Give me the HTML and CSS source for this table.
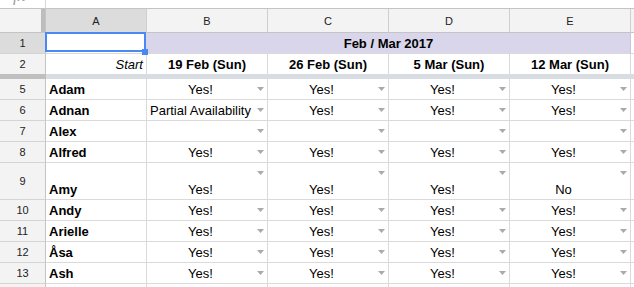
FILE: index.html
```html
<!DOCTYPE html>
<html lang="en">
<head>
  <meta charset="UTF-8">
  <title>Availability</title>
  <link rel="stylesheet" href="styles.css">
</head>
<body>

  <div class="formula">
    <div class="fx-cell"><span class="fx">fx</span></div>
    <div></div>
  </div>

  <div class="row colhead">
    <div class="corner"></div>
    <div class="ch sel">A</div>
    <div class="ch">B</div>
    <div class="ch">C</div>
    <div class="ch">D</div>
    <div class="ch">E</div>
    <div class="ch last"></div>
  </div>

  <div class="row">
    <div class="rh sel">1</div>
    <div class="cell a1"><div class="selection"><span class="handle"></span></div></div>
    <div class="cell merged bold">Feb / Mar 2017</div>
    <div class="cell"></div>
  </div>

  <div class="row r2">
    <div class="rh">2</div>
    <div class="cell start">Start</div>
    <div class="cell bold mid">19 Feb (Sun)</div>
    <div class="cell bold mid">26 Feb (Sun)</div>
    <div class="cell bold mid">5 Mar (Sun)</div>
    <div class="cell bold mid">12 Mar (Sun)</div>
    <div class="cell"></div>
  </div>

  <div class="freeze"><div class="fz-left"></div><div class="fz-right"></div></div>

  <div class="row">
    <div class="rh">5</div>
    <div class="cell bold">Adam</div>
    <div class="cell v"><span class="t">Yes!</span><i class="dd"></i></div>
    <div class="cell v"><span class="t">Yes!</span><i class="dd"></i></div>
    <div class="cell v"><span class="t">Yes!</span><i class="dd"></i></div>
    <div class="cell v"><span class="t">Yes!</span><i class="dd"></i></div>
    <div class="cell"></div>
  </div>

  <div class="row">
    <div class="rh">6</div>
    <div class="cell bold">Adnan</div>
    <div class="cell v"><span class="t">Partial Availability</span><i class="dd"></i></div>
    <div class="cell v"><span class="t">Yes!</span><i class="dd"></i></div>
    <div class="cell v"><span class="t">Yes!</span><i class="dd"></i></div>
    <div class="cell v"><span class="t">Yes!</span><i class="dd"></i></div>
    <div class="cell"></div>
  </div>

  <div class="row">
    <div class="rh">7</div>
    <div class="cell bold">Alex</div>
    <div class="cell v"><span class="t"></span><i class="dd"></i></div>
    <div class="cell v"><span class="t"></span><i class="dd"></i></div>
    <div class="cell v"><span class="t"></span><i class="dd"></i></div>
    <div class="cell v"><span class="t"></span><i class="dd"></i></div>
    <div class="cell"></div>
  </div>

  <div class="row">
    <div class="rh">8</div>
    <div class="cell bold">Alfred</div>
    <div class="cell v"><span class="t">Yes!</span><i class="dd"></i></div>
    <div class="cell v"><span class="t">Yes!</span><i class="dd"></i></div>
    <div class="cell v"><span class="t">Yes!</span><i class="dd"></i></div>
    <div class="cell v"><span class="t">Yes!</span><i class="dd"></i></div>
    <div class="cell"></div>
  </div>

  <div class="row tall">
    <div class="rh">9</div>
    <div class="cell bold">Amy</div>
    <div class="cell v"><span class="t">Yes!</span><i class="dd"></i></div>
    <div class="cell v"><span class="t">Yes!</span><i class="dd"></i></div>
    <div class="cell v"><span class="t">Yes!</span><i class="dd"></i></div>
    <div class="cell v"><span class="t">No</span><i class="dd"></i></div>
    <div class="cell"></div>
  </div>

  <div class="row">
    <div class="rh">10</div>
    <div class="cell bold">Andy</div>
    <div class="cell v"><span class="t">Yes!</span><i class="dd"></i></div>
    <div class="cell v"><span class="t">Yes!</span><i class="dd"></i></div>
    <div class="cell v"><span class="t">Yes!</span><i class="dd"></i></div>
    <div class="cell v"><span class="t">Yes!</span><i class="dd"></i></div>
    <div class="cell"></div>
  </div>

  <div class="row">
    <div class="rh">11</div>
    <div class="cell bold">Arielle</div>
    <div class="cell v"><span class="t">Yes!</span><i class="dd"></i></div>
    <div class="cell v"><span class="t">Yes!</span><i class="dd"></i></div>
    <div class="cell v"><span class="t">Yes!</span><i class="dd"></i></div>
    <div class="cell v"><span class="t">Yes!</span><i class="dd"></i></div>
    <div class="cell"></div>
  </div>

  <div class="row">
    <div class="rh">12</div>
    <div class="cell bold">Åsa</div>
    <div class="cell v"><span class="t">Yes!</span><i class="dd"></i></div>
    <div class="cell v"><span class="t">Yes!</span><i class="dd"></i></div>
    <div class="cell v"><span class="t">Yes!</span><i class="dd"></i></div>
    <div class="cell v"><span class="t">Yes!</span><i class="dd"></i></div>
    <div class="cell"></div>
  </div>

  <div class="row">
    <div class="rh">13</div>
    <div class="cell bold">Ash</div>
    <div class="cell v"><span class="t">Yes!</span><i class="dd"></i></div>
    <div class="cell v"><span class="t">Yes!</span><i class="dd"></i></div>
    <div class="cell v"><span class="t">Yes!</span><i class="dd"></i></div>
    <div class="cell v"><span class="t">Yes!</span><i class="dd"></i></div>
    <div class="cell"></div>
  </div>

  <div class="row">
    <div class="rh"></div>
    <div class="cell"></div>
    <div class="cell"></div>
    <div class="cell"></div>
    <div class="cell"></div>
    <div class="cell"></div>
    <div class="cell"></div>
  </div>

</body>
</html>
```

FILE: styles.css
```css
body {
  margin: 0;
  width: 634px;
  height: 287px;
  overflow: hidden;
  background: #fff;
  font-family: 'Liberation Sans', Arial, sans-serif;
  color: #000;
}
.formula {
  display: grid;
  grid-template-columns: 46px 1fr;
  height: 9px;
  border-bottom: 1px solid #c4c4c4;
  box-sizing: border-box;
}
.fx-cell {
  border-right: 1px solid #d6d6d6;
  overflow: hidden;
}
.fx {
  display: block;
  margin: -14px 0 0 13px;
  font-family: 'Liberation Serif', serif;
  font-style: italic;
  font-size: 17px;
  line-height: 20px;
  color: #9e9e9e;
}
.row {
  display: grid;
  grid-template-columns: 46px 101px 121px 121px 121px 121px 1fr;
  height: 21px;
}
.row.r2 { height: 20px; }
.row.tall { height: 37px; }
.colhead { height: 24px; }
.corner {
  background: #f3f3f3;
  border-right: 1px solid #c4c4c4;
  border-bottom: 1px solid #c4c4c4;
  box-shadow: inset -4px 0 #bdbdbd;
}
.ch {
  display: flex;
  align-items: center;
  justify-content: center;
  background: #f3f3f3;
  border-right: 1px solid #cfcfcf;
  border-bottom: 1px solid #c4c4c4;
  font-size: 11px;
  color: #222;
}
.ch.sel { background: #dcdcdc; }
.ch.last { border-right: none; }
.rh {
  display: flex;
  align-items: center;
  justify-content: center;
  background: #f3f3f3;
  border-right: 1px solid #c4c4c4;
  border-bottom: 1px solid #d4d4d4;
  font-size: 11px;
  color: #222;
}
.rh.sel { background: #dcdcdc; }
.cell {
  display: flex;
  align-items: flex-end;
  min-width: 0;
  padding: 0 3px 2px;
  border-right: 1px solid #dadada;
  border-bottom: 1px solid #dadada;
  font-size: 13px;
  line-height: 15px;
  white-space: nowrap;
  overflow: hidden;
}
.r2 .cell, .r2 .rh { border-bottom: none; }
.bold { font-weight: bold; }
.mid { justify-content: center; }
.start {
  justify-content: flex-end;
  font-style: italic;
}
.merged {
  grid-column: span 4;
  justify-content: center;
  background: #d9d5ea;
  border-right-color: #c9c6dc;
}
.a1 {
  position: relative;
  overflow: visible;
}
.selection {
  position: absolute;
  top: -1px;
  left: -1px;
  right: 0;
  bottom: 1px;
  border: 2px solid #4a89f3;
  z-index: 2;
}
.handle {
  position: absolute;
  right: -4px;
  bottom: -5px;
  width: 6px;
  height: 6px;
  background: #4a89f3;
}
.cell.v { padding-left: 2px; }
.cell.v .t {
  flex: 1;
  text-align: center;
}
.dd {
  align-self: flex-start;
  flex: none;
  width: 7px;
  height: 4px;
  margin: 8px 0 0 5px;
  background: #aaa;
  clip-path: polygon(0 0, 100% 0, 50% 100%);
}
.freeze {
  display: grid;
  grid-template-columns: 46px 1fr;
  height: 5px;
}
.fz-left { background: #bfbfbf; }
.fz-right { background: #d8dce3; }
```
